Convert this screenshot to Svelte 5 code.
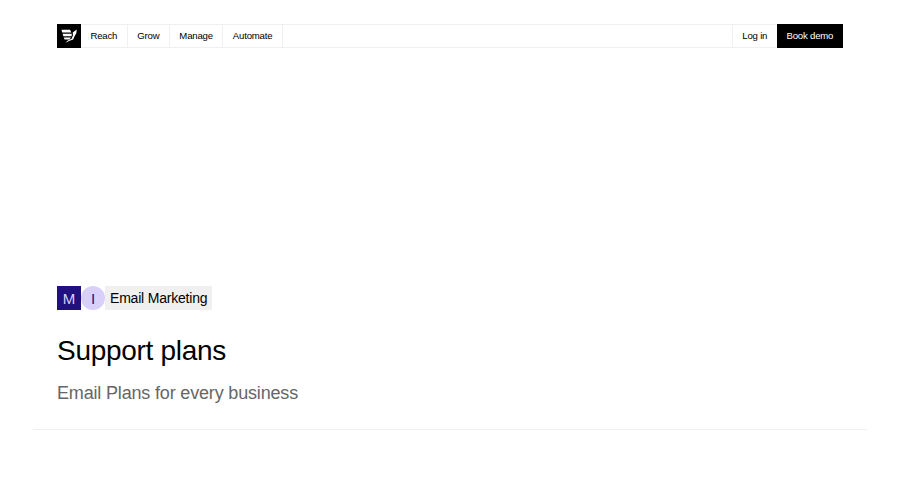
<script lang="ts">
	const navItems = ['Reach', 'Grow', 'Manage', 'Automate'];
</script>

<div class="page">
	<header class="nav">
		<a class="logo" href="#top" aria-label="Home">
			<svg width="16" height="14" viewBox="0 0 16 14">
				<path d="M0.5 0.8H9L10.3 3.4H1.2ZM1.6 4.7H10.8L10.6 7.2H2.4ZM2.8 8.4H10L8.4 10.6H3.6ZM15.8 0.6L15.3 4.2L13.4 7.4L12.2 10.4L8.6 11.8L4.6 13.8L6.4 11.8L10.6 9.8L12 6.2L11.7 3.6Z" fill="#fff" />
			</svg>
		</a>
		{#each navItems as item}
			<a class="nav-item" href="#top">{item}</a>
		{/each}
		<div class="spacer"></div>
		<a class="nav-item login" href="#top">Log in</a>
		<a class="demo" href="#top">Book demo</a>
	</header>

	<section class="hero">
		<div class="tags">
			<span class="square">M</span>
			<span class="circle">I</span>
			<span class="label">Email Marketing</span>
		</div>
		<h1>Support plans</h1>
		<p>Email Plans for every business</p>
	</section>
	<div class="rule"></div>
</div>

<style>
	:global(body) {
		background: #fff;
		font-family: 'Liberation Sans', Arial, sans-serif;
		color: #000;
	}

	.page {
		height: 484px;
		overflow: hidden;
		padding-top: 24px;
		box-sizing: border-box;
	}

	a {
		color: inherit;
		text-decoration: none;
	}

	.nav {
		display: flex;
		height: 24px;
		margin: 0 57px;
		box-sizing: border-box;
		border-top: 1px solid #f0f0f0;
		border-bottom: 1px solid #f0f0f0;
		align-items: stretch;
		font-size: 9.6px;
		letter-spacing: -0.2px;
	}

	.logo {
		width: 24px;
		margin: -1px 0;
		background: #000;
		display: flex;
		align-items: center;
		justify-content: center;
	}

	.nav-item {
		display: flex;
		align-items: center;
		padding: 0 9.5px 1px;
		border-right: 1px solid #f0f0f0;
	}

	.spacer {
		flex: 1;
	}

	.login {
		border-right: 0;
		border-left: 1px solid #f0f0f0;
	}

	.demo {
		display: flex;
		align-items: center;
		padding: 0 9.75px 1px;
		margin: -1px 0;
		background: #000;
		color: #fff;
	}

	.hero {
		margin: 238px 57px 0;
	}

	.tags {
		display: flex;
		height: 24px;
		align-items: stretch;
	}

	.square,
	.circle {
		width: 24px;
		display: flex;
		align-items: center;
		justify-content: center;
		font-size: 15px;
	}

	.square {
		background: #21117f;
		color: #d9d0fa;
	}

	.circle {
		background: #d9d0fa;
		color: #21117f;
		border-radius: 50%;
	}

	.label {
		display: flex;
		align-items: center;
		padding: 0 5px;
		background: #f0f0f0;
		font-size: 14px;
		letter-spacing: -0.2px;
	}

	h1 {
		margin: 23px 0 0;
		font-size: 28px;
		font-weight: 400;
		line-height: 35px;
		letter-spacing: -0.3px;
	}

	p {
		margin: 13px 0 0;
		font-size: 18px;
		line-height: 24px;
		letter-spacing: -0.17px;
		color: #666;
	}

	.rule {
		margin: 24px 33px 0;
		height: 1px;
		background: #f0f0f0;
	}
</style>
